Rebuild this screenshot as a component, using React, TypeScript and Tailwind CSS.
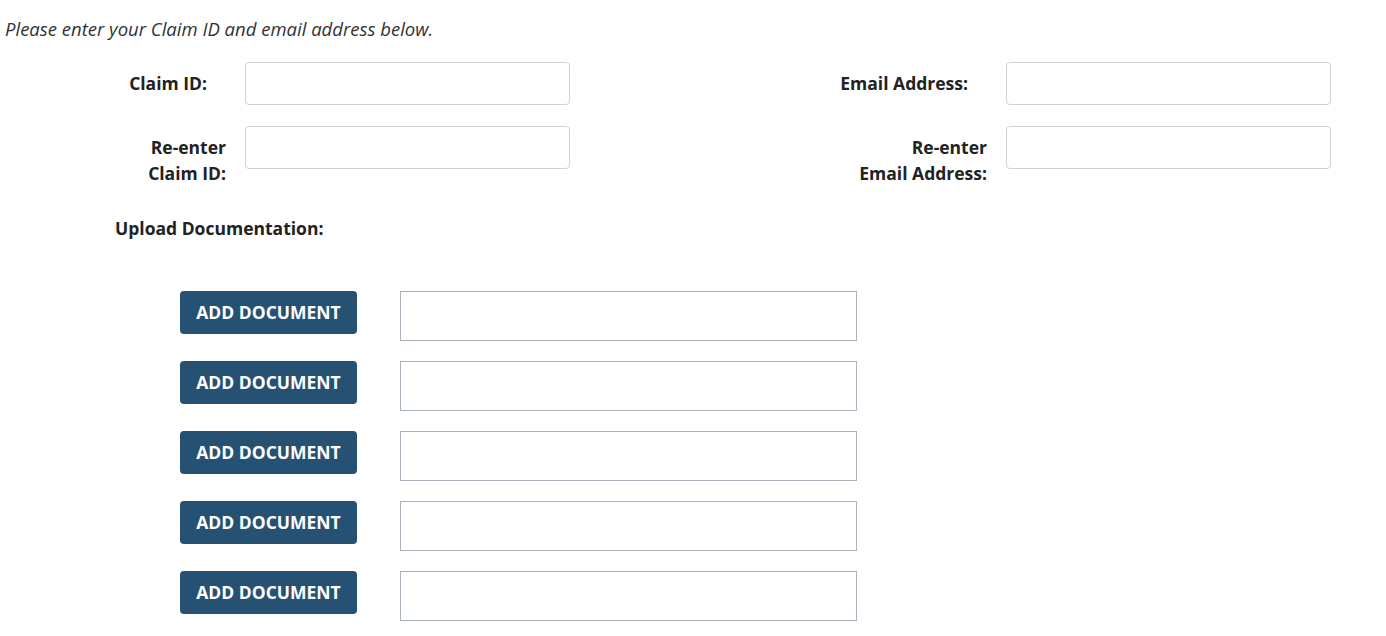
import React from "react";

const font = { fontFamily: '"Open Sans", "Noto Sans", sans-serif' };

function Field({ lines, first }: { lines: string[]; first?: boolean }) {
  return (
    <div className="flex items-start">
      <label
        className={`w-[245px] pt-[8px] text-right text-[17.5px] font-bold leading-[26px] text-[#222] ${
          first ? "pr-[38px]" : "pr-[19px]"
        }`}
      >
        {lines.map((l) => (
          <span key={l} className="block">
            {l}
          </span>
        ))}
      </label>
      <input
        type="text"
        className="h-[43px] w-[325px] rounded-[4px] border border-[#cdd2d8] bg-white"
      />
    </div>
  );
}

export default function App() {
  const rows = [0, 1, 2, 3, 4];
  return (
    <main className="min-h-screen bg-white text-[#222]" style={font}>
      <p className="pl-[5px] pt-[17px] text-[18.5px] italic leading-[24px] text-[#333]">
        Please enter your Claim ID and email address below.
      </p>

      <div className="mt-[21px] flex">
        <div className="flex w-[761px] flex-col gap-[21px]">
          <Field lines={["Claim ID:"]} first />
          <Field lines={["Re-enter", "Claim ID:"]} />
        </div>
        <div className="flex flex-col gap-[21px]">
          <Field lines={["Email Address:"]} first />
          <Field lines={["Re-enter", "Email Address:"]} />
        </div>
      </div>

      <h2 className="mt-[29px] pl-[115px] text-[17.5px] font-bold leading-[26px]">
        Upload Documentation:
      </h2>

      <div className="mt-[50px] flex flex-col gap-[20px] pl-[180px]">
        {rows.map((i) => (
          <div key={i} className="flex items-start gap-[43px]">
            <button
              type="button"
              className="h-[43px] w-[177px] rounded-[4px] bg-[#265173] text-[17.5px] font-bold uppercase text-white"
            >
              Add Document
            </button>
            <div className="h-[50px] w-[457px] border border-[#aab3bd] bg-white" />
          </div>
        ))}
      </div>
    </main>
  );
}
